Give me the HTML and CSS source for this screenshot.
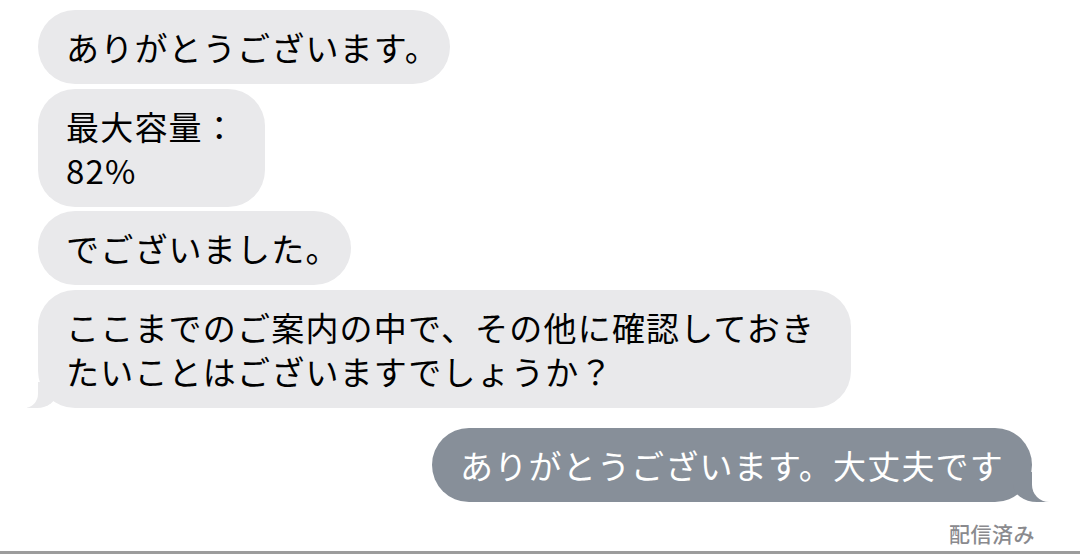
FILE: index.html
```html
<!DOCTYPE html>
<html lang="ja">
<head>
    <meta charset="UTF-8">
    <meta name="viewport" content="width=device-width, initial-scale=1.0">
    <title>メッセージ</title>
    <link rel="stylesheet" href="styles.css">
</head>
<body>
    <div id="thread">
        <div class="bubble them short">ありがとうございます<span class="trim">。</span></div>
        <div class="bubble them short">最大容量：<br>82%</div>
        <div class="bubble them short">でございました<span class="trim">。</span></div>
        <div class="bubble them tail">ここまでのご案内の中で、その他に確認しておきたいことはございますでしょうか？</div>
        <div class="bubble me short tail">ありがとうございます。大丈夫です</div>
        <div class="status">配信済み</div>
    </div>
    <div id="bottom-line"></div>
</body>
</html>
```
FILE: styles.css
```css
body {
    margin: 0;
    height: 554px;
    overflow: hidden;
    background-color: #fff;
    font-family: "Noto Sans CJK JP", "Noto Sans", sans-serif;
    display: flex;
    flex-direction: column;
}
#thread {
    flex: 1;
    display: flex;
    flex-direction: column;
    align-items: flex-start;
    gap: 4.5px;
    padding: 10px 48px 0 38px;
}
.bubble {
    position: relative;
    box-sizing: border-box;
    max-width: 813px;
    padding: 15px 28px;
    border-radius: 37px;
    font-size: 33px;
    letter-spacing: 1.2px;
    line-height: 44px;
}
.bubble.short {
    white-space: nowrap;
}
.bubble.them {
    background-color: #e9e9eb; /* light gray for incoming */
    color: #000;
}
.bubble.me {
    align-self: flex-end;
    margin-top: 16px;
    background-color: #878f99; /* muted blue-gray for outgoing */
    color: #fff;
}
.trim {
    margin-right: -17px;
}
/* tail of the last bubble in a group */
.bubble.them.tail::before {
    content: "";
    position: absolute;
    bottom: 0;
    left: -11px;
    width: 30px;
    height: 26px;
    background-color: #e9e9eb;
    border-bottom-right-radius: 20px 16px;
}
.bubble.them.tail::after {
    content: "";
    position: absolute;
    bottom: 0;
    left: -30px;
    width: 30px;
    height: 26px;
    background-color: #fff;
    border-bottom-right-radius: 14px;
}
.bubble.me.tail::before {
    content: "";
    position: absolute;
    bottom: 0;
    right: -17px;
    width: 36px;
    height: 30px;
    background-color: #878f99;
    border-bottom-left-radius: 24px 18px;
}
.bubble.me.tail::after {
    content: "";
    position: absolute;
    bottom: 0;
    right: -36px;
    width: 36px;
    height: 30px;
    background-color: #fff;
    border-bottom-left-radius: 17px;
}
.status {
    align-self: flex-end;
    margin-top: 11px;
    margin-right: -3px;
    font-size: 21px;
    font-weight: 500;
    color: #8a8a8e;
    letter-spacing: 0.5px;
}
#bottom-line {
    height: 3px;
    background-color: #9c9c9c;
}
```
